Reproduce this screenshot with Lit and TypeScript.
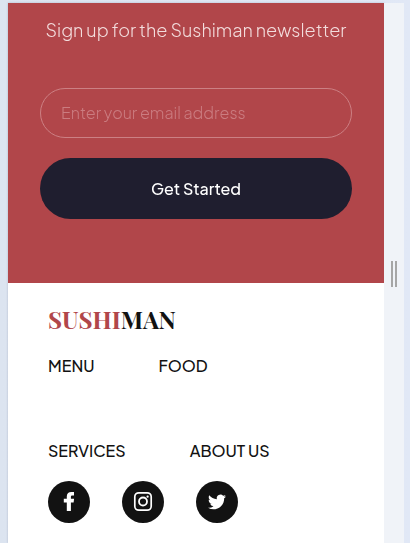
import { LitElement, html, css } from "lit";
import { customElement } from "lit/decorators.js";

@customElement("app-root")
export class AppRoot extends LitElement {
  static styles = css`
    :host {
      display: grid;
      grid-template-columns: 376px 20px;
      height: 543px;
      box-sizing: border-box;
      padding: 3px 6px 0 8px;
      overflow: hidden;
      background: linear-gradient(90deg, #dce4f0, #e1e8f6);
      font-family: "Plus Jakarta Sans", Inter, "Liberation Sans", sans-serif;
      font-size: 16px;
      color: #121212;
    }
    .page { background: #fff; box-shadow: 0 0 2px rgba(70, 80, 110, 0.3); }
    .gutter {
      background: #f0f3f8;
      display: flex;
      justify-content: center;
      gap: 2px;
      padding-top: 258px;
    }
    .bar { width: 2px; height: 26px; background: #a6a6a6; }
    .newsletter {
      box-sizing: border-box;
      height: 280px;
      background: #b1464a;
      padding: 14px 32px 0;
      display: flex;
      flex-direction: column;
    }
    .title {
      margin: 0;
      height: 26px;
      line-height: 26px;
      text-align: center;
      white-space: nowrap;
      font-size: 18px;
      font-weight: 300;
      color: #f3dddd;
      will-change: transform;
    }
    .field {
      box-sizing: border-box;
      width: 312px;
      height: 50px;
      margin: 45px 0 20px;
      padding: 0 20px 2px;
      border: 1px solid #cc8084;
      border-radius: 25px;
      background: transparent;
      outline: none;
      font: 300 16px "Plus Jakarta Sans", Inter, "Liberation Sans", sans-serif;
      color: #fff;
      will-change: transform;
    }
    .field::placeholder { color: #cb7c80; opacity: 1; }
    .submit {
      height: 61px;
      padding: 0;
      border: 0;
      border-radius: 31px;
      background: #1f1e2f;
      color: #fff;
      font: 500 16px "Plus Jakarta Sans", Inter, "Liberation Sans", sans-serif;
      will-change: transform;
    }
    .footer { padding: 21px 40px 0; }
    .brand {
      height: 30px;
      line-height: 30px;
      font-family: "Playfair Display", "Liberation Serif", serif;
      font-size: 24px;
      font-weight: 700;
    }
    .accent { color: #b1464a; }
    .links { display: flex; gap: 64px; height: 24px; line-height: 24px; white-space: nowrap; font-weight: 500; }
    .first { margin-top: 20px; }
    .second { margin-top: 61px; }
    .social { display: flex; gap: 32px; margin-top: 18px; }
    .disc {
      width: 42px;
      height: 42px;
      border-radius: 50%;
      background: #121212;
      display: grid;
      place-items: center;
    }
    .disc svg { display: block; }
  `;

  render() {
    return html`
      <main class="page">
        <section class="newsletter">
          <p class="title">Sign up for the Sushiman newsletter</p>
          <input class="field" type="email" placeholder="Enter your email address" />
          <button class="submit">Get Started</button>
        </section>
        <footer class="footer">
          <div class="brand"><span class="accent">SUSHI</span>MAN</div>
          <nav class="links first"><span>MENU</span><span>FOOD</span></nav>
          <nav class="links second"><span>SERVICES</span><span>ABOUT US</span></nav>
          <div class="social">
            <span class="disc">
              <svg width="42" height="42" viewBox="0 0 42 42" fill="#fff">
                <path d="M18.8 30v-8.6h-3v-3.6h3v-2.5c0-3 1.8-4.4 4.6-4.4H26v3.5h-1.6c-1.3 0-1.5.6-1.5 1.6v1.8h3.2l-.5 3.6h-2.7V30z" />
              </svg>
            </span>
            <span class="disc">
              <svg width="42" height="42" viewBox="0 0 42 42" fill="none" stroke="#fff">
                <rect x="12.8" y="11.8" width="16.4" height="17.4" rx="4" stroke-width="1.7" />
                <circle cx="21" cy="20.5" r="4" stroke-width="1.8" />
                <circle cx="25.6" cy="15.7" r="1.1" fill="#fff" stroke="none" />
              </svg>
            </span>
            <span class="disc">
              <svg width="18" height="18" viewBox="0 0 24 24" fill="#fff">
                <path d="M23.953 4.57a10 10 0 01-2.825.775 4.958 4.958 0 002.163-2.723c-.951.555-2.005.959-3.127 1.184a4.92 4.92 0 00-8.384 4.482C7.69 8.095 4.067 6.13 1.64 3.162a4.822 4.822 0 00-.666 2.475c0 1.71.87 3.213 2.188 4.096a4.904 4.904 0 01-2.228-.616v.06a4.923 4.923 0 003.946 4.827 4.996 4.996 0 01-2.212.085 4.936 4.936 0 004.604 3.417 9.867 9.867 0 01-6.102 2.105c-.39 0-.779-.023-1.17-.067a13.995 13.995 0 007.557 2.209c9.053 0 13.998-7.496 13.998-13.985 0-.21 0-.42-.015-.63A9.935 9.935 0 0024 4.59z" />
              </svg>
            </span>
          </div>
        </footer>
      </main>
      <aside class="gutter"><span class="bar"></span><span class="bar"></span></aside>
    `;
  }
}
